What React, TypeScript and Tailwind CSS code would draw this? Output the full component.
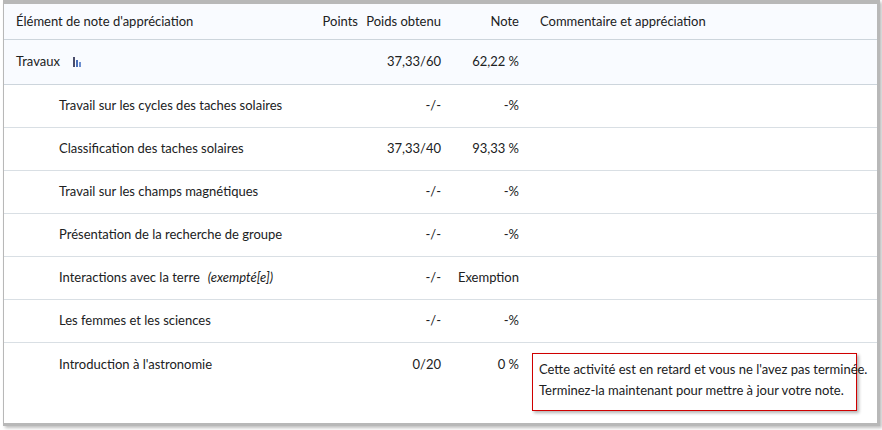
const Bars = () => (
  <svg width="10" height="10" viewBox="0 0 10 10" className="inline-block">
    <rect x="0" y="0" width="2" height="10" fill="#494c6b" />
    <rect x="3" y="3" width="2" height="7" fill="#4a6fb8" />
    <rect x="6" y="5" width="2" height="5" fill="#6d8fd0" />
  </svg>
);

type Row = { name: string; poids: string; note: string; bars?: boolean; extra?: string; comment?: boolean };

const rows: Row[] = [
  { name: "Travail sur les cycles des taches solaires", poids: "-/-", note: "-%", bars: true },
  { name: "Classification des taches solaires", poids: "37,33/40", note: "93,33 %" },
  { name: "Travail sur les champs magnétiques", poids: "-/-", note: "-%" },
  { name: "Présentation de la recherche de groupe", poids: "-/-", note: "-%" },
  { name: "Interactions avec la terre", poids: "-/-", note: "Exemption", extra: "(exempté[e])" },
  { name: "Les femmes et les sciences", poids: "-/-", note: "-%" },
  { name: "Introduction à l'astronomie", poids: "0/20", note: "0 %", comment: true },
];

export default function App() {
  return (
    <div className="w-[882px] h-[430px] bg-white text-[13px] text-[#202122]" style={{ fontFamily: "Lato, 'Liberation Sans', sans-serif" }}>
      <div className="ml-[3px] w-[877px] h-[426px] border-t-[4px] border-r-[3px] border-b-[3px] border-l border-[#b8b8b8] shadow-[2px_2px_3px_rgba(0,0,0,0.25)] overflow-hidden">
        <div className="grid grid-cols-[266px_88px_83px_78px_1fr] h-[36px] items-center bg-[#f9fbff] border-b border-[#cdd5dc]">
          <div className="pl-[12px]">Élément de note d'appréciation</div>
          <div className="text-right">Points</div>
          <div className="text-right">Poids obtenu</div>
          <div className="text-right">Note</div>
          <div className="pl-[21px]">Commentaire et appréciation</div>
        </div>
        <div className="grid grid-cols-[266px_88px_83px_78px_1fr] h-[45px] items-center bg-[#f9fbff] border-b border-[#cdd5dc]">
          <div className="pl-[12px] flex items-center gap-[13px]">Travaux <Bars /></div>
          <div />
          <div className="text-right">37,33/60</div>
          <div className="text-right">62,22 %</div>
          <div />
        </div>
        {rows.map((r) => (
          <div key={r.name} className={`grid grid-cols-[266px_88px_83px_78px_1fr] h-[43px] items-center ${r.comment ? "" : "border-b border-[#d9dfe4]"}`}>
            <div className="pl-[55px] flex items-center gap-[13px] whitespace-nowrap">
              {r.name}
              {r.bars && <Bars />}
              {r.extra && <span className="italic -ml-[5px]">{r.extra}</span>}
            </div>
            <div />
            <div className="text-right">{r.poids}</div>
            <div className="text-right">{r.note}</div>
            <div className="relative">
              {r.comment && (
                <div className="absolute left-[13px] -top-[12px] w-[325px] border border-[#d00000] shadow-[2px_2px_3px_rgba(0,0,0,0.3)] bg-white px-[6px] pt-[5px] pb-[9px] leading-[21px] whitespace-nowrap">
                  <div>Cette activité est en retard et vous ne l'avez pas terminée.</div>
                  <div>Terminez-la maintenant pour mettre à jour votre note.</div>
                </div>
              )}
            </div>
          </div>
        ))}
      </div>
    </div>
  );
}
